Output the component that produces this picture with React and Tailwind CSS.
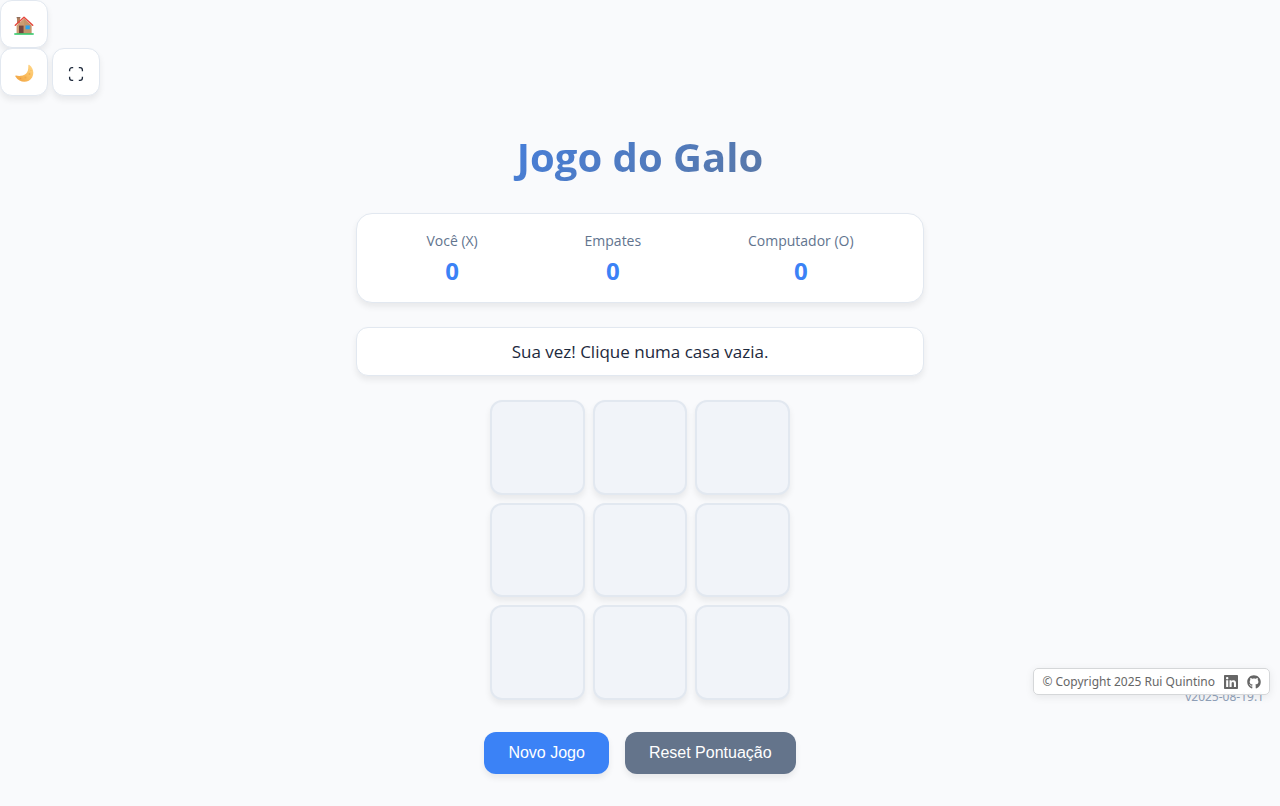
import { useState } from 'react';
import { FaLinkedin, FaGithub } from 'react-icons/fa';

function HouseIcon() {
  return (
    <svg viewBox="0 0 20 20" className="size-5" aria-hidden="true">
      <path d="M3 1.500h3v6H3z" fill="#b5805c" />
      <path d="M2.600 1h3.800v1.300H2.600z" fill="#8f6f5e" />
      <path d="M2.600 9.500 10 2.500l7.400 7V18H2.600z" fill="#cb9d73" />
      <path d="M10 2.500 17.400 9.500V18H10z" fill="#c3956b" />
      <path d="M1.300 9.300 10 1.200l8.700 8.100" fill="none" stroke="#e5483d" strokeWidth="1.500" strokeLinejoin="round" strokeLinecap="round" />
      <path d="M5 9.600h4.600v7.800H5z" fill="#74463f" />
      <path d="M11.500 9.400h4.300v3.900h-4.300z" fill="#2ba3ee" />
      <path d="M.3 17.200h19.400v1.600H.3z" fill="#35c96c" />
    </svg>
  );
}

function MoonIcon() {
  return (
    <svg viewBox="0 0 20 20" className="size-5" aria-hidden="true">
      <defs>
        <linearGradient id="moonFill" x1="0" y1="1" x2="1" y2="0">
          <stop offset="0" stopColor="#efa03e" />
          <stop offset=".55" stopColor="#fbc062" />
          <stop offset="1" stopColor="#ffd88c" />
        </linearGradient>
      </defs>
      <path d="M15.400 1c3.900 2.900 5.100 8.200 2.700 12.400-3.100 5.500-11.900 6.600-16.700-.9-.3-.6 0-1 .6-.9 3.400.7 7.200.4 9.900-1.900 2.300-2 2.500-5.200 2.400-8.300 0-.6.600-.8 1.100-.4z" fill="url(#moonFill)" />
      <circle cx="15.500" cy="10" r=".9" fill="#e99a3a" opacity=".5" />
      <circle cx="11.500" cy="13.500" r="1" fill="#e99a3a" opacity=".5" />
      <circle cx="17" cy="6.500" r=".6" fill="#e99a3a" opacity=".4" />
      <circle cx="6.500" cy="14.500" r=".8" fill="#e07f35" opacity=".5" />
    </svg>
  );
}

function FullscreenIcon() {
  return (
    <svg viewBox="0 0 16 16" className="size-4" fill="none" stroke="#1e293b" strokeWidth="1.300" aria-hidden="true">
      <path d="M1.600 5.200V4A2.300 2.300 0 0 1 3.900 1.700H5.200M10.800 1.700h1.300a2.300 2.300 0 0 1 2.300 2.300v1.200M14.400 10.800V12a2.300 2.300 0 0 1-2.300 2.300h-1.300M5.200 14.300H3.900A2.300 2.300 0 0 1 1.600 12v-1.200" />
    </svg>
  );
}

const toolClass =
  'flex size-12 cursor-pointer items-center justify-center rounded-xl border border-slate-200 bg-white pt-1 shadow-[0_4px_6px_rgba(0,0,0,0.07)]';

const lines = [
  [0, 1, 2], [3, 4, 5], [6, 7, 8],
  [0, 3, 6], [1, 4, 7], [2, 5, 8],
  [0, 4, 8], [2, 4, 6],
];

const winnerOf = (b) => {
  const line = lines.find(([x, y, z]) => b[x] && b[x] === b[y] && b[x] === b[z]);
  return line ? b[line[0]] : b.every(Boolean) ? 'draw' : null;
};

const emptyBoard = Array(9).fill('');
const emptyScore = { X: 0, draw: 0, O: 0 };
const messages = {
  X: 'Você ganhou!',
  O: 'O computador ganhou!',
  draw: 'Empate!',
};

export default function App() {
  const [board, setBoard] = useState(emptyBoard);
  const [score, setScore] = useState(emptyScore);
  const result = winnerOf(board);

  const play = (index) => {
    if (board[index] || result) return;
    const next = [...board];
    next[index] = 'X';
    if (!winnerOf(next)) {
      const free = next.flatMap((cell, i) => (cell ? [] : [i]));
      next[free[Math.floor(Math.random() * free.length)]] = 'O';
    }
    const outcome = winnerOf(next);
    if (outcome) setScore({ ...score, [outcome]: score[outcome] + 1 });
    setBoard(next);
  };

  const scores = [
    ['Você (X)', score.X],
    ['Empates', score.draw],
    ['Computador (O)', score.O],
  ];

  return (
    <div className="relative min-h-screen bg-[#f9fafc] font-['Segoe_UI','Open_Sans',sans-serif] text-slate-800">
      <nav>
        <a href="#inicio" aria-label="Início" className={toolClass}>
          <HouseIcon />
        </a>
        <div className="flex gap-1">
          <button type="button" aria-label="Alternar tema" className={toolClass}>
            <MoonIcon />
          </button>
          <button type="button" aria-label="Ecrã inteiro" className={toolClass}>
            <FullscreenIcon />
          </button>
        </div>
      </nav>

      <main className="mx-auto flex max-w-[600px] flex-col items-center px-4 pt-8 pb-8">
        <h1 className="mb-7 w-full bg-[linear-gradient(135deg,#3b82f6,#64748b)] bg-clip-text text-center text-[40px] leading-[57px] font-bold text-transparent">
          Jogo do Galo
        </h1>

        <section className="mb-6 flex w-full justify-around rounded-2xl border border-slate-200 bg-white p-4 shadow-[0_4px_6px_rgba(0,0,0,0.07)]">
          {scores.map(([label, value]) => (
            <div key={label} className="text-center">
              <div className="mb-1 text-sm leading-[22px] text-slate-500">{label}</div>
              <div className="text-2xl leading-[30px] font-bold text-[#3b82f6]">{value}</div>
            </div>
          ))}
        </section>

        <p role="status" className="mb-6 w-full rounded-xl border border-slate-200 bg-white px-4 py-2.5 text-center text-[17px] leading-[27px] shadow-[0_4px_6px_rgba(0,0,0,0.07)]">
          {result ? messages[result] : 'Sua vez! Clique numa casa vazia.'}
        </p>

        <div className="mb-8 grid aspect-square w-full max-w-[300px] grid-cols-3 grid-rows-3 gap-2">
          {board.map((cell, index) => (
            <button
              key={index}
              type="button"
              aria-label={`Casa ${index + 1}`}
              onClick={() => play(index)}
              className="cursor-pointer rounded-xl border-2 border-slate-200 bg-[#f1f4f9] text-4xl font-bold text-[#3b82f6] shadow-[0_4px_6px_rgba(0,0,0,0.07)]"
            >
              {cell}
            </button>
          ))}
        </div>

        <div className="flex flex-wrap justify-center gap-4 font-['Liberation_Sans',Arial,sans-serif] text-base leading-[18px] text-white">
          <button
            type="button"
            onClick={() => setBoard(emptyBoard)}
            className="cursor-pointer rounded-xl bg-[#3b82f6] px-6 py-3 shadow-[0_4px_6px_rgba(0,0,0,0.07)]"
          >
            Novo Jogo
          </button>
          <button
            type="button"
            onClick={() => setScore(emptyScore)}
            className="cursor-pointer rounded-xl bg-[#64748b] px-6 py-3 shadow-[0_4px_6px_rgba(0,0,0,0.07)]"
          >
            Reset Pontuação
          </button>
        </div>
      </main>

      <div className="absolute right-4 bottom-[99px] font-['Segoe_UI','Noto_Sans',sans-serif] text-xs leading-5 text-slate-400">
        v2025-08-19.1
      </div>
      <footer className="absolute right-2.5 bottom-[111px] flex items-center gap-2 rounded-[5px] border border-[#d5d7d9] bg-white/95 px-2 pt-[5px] pb-1 font-['Segoe_UI','Noto_Sans',sans-serif] text-xs leading-4 text-[#666] shadow-[0_2px_8px_rgba(0,0,0,0.08)]">
        <span>© Copyright 2025 Rui Quintino</span>
        <a href="#linkedin" aria-label="LinkedIn">
          <FaLinkedin size={16} />
        </a>
        <a href="#github" aria-label="GitHub">
          <FaGithub size={14} />
        </a>
      </footer>
    </div>
  );
}
